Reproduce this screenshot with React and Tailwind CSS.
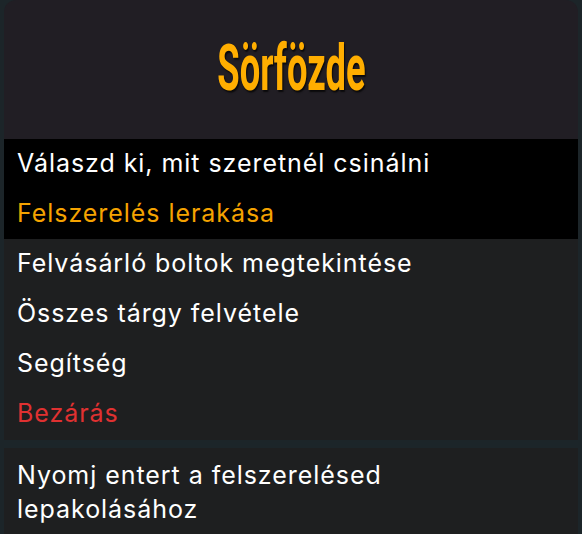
const menuItems = [
  { label: "Felvásárló boltok megtekintése", tone: "text-white" },
  { label: "Összes tárgy felvétele", tone: "text-white" },
  { label: "Segítség", tone: "text-white" },
  { label: "Bezárás", tone: "text-[#e03131]" },
];

const App = () => {
  return (
    <div className="h-[534px] w-[582px] overflow-hidden bg-[#1c2529] px-[4px] font-['Inter','Liberation_Sans',sans-serif] text-[25px] tracking-[0.95px]">
      <div className="flex h-[139px] items-center justify-center rounded-t-[12px] bg-[#211e24] pb-[2px]">
        <span className="inline-block scale-x-56 font-['Roboto',sans-serif] text-[65px] font-bold leading-none tracking-normal text-[#ffae00] [text-shadow:2px_2px_2px_rgba(0,0,0,0.7)]">
          Sörfözde
        </span>
      </div>

      <div className="bg-black px-[13px]">
        <div className="flex h-[50px] items-center text-white">Válaszd ki, mit szeretnél csinálni</div>
        <div className="flex h-[50px] items-center text-[#f5a300]">Felszerelés lerakása</div>
      </div>

      <div className="bg-[#1e1f20] px-[13px] pb-[1px]">
        {menuItems.map((item) => (
          <div key={item.label} className={`flex h-[50px] items-center ${item.tone}`}>
            {item.label}
          </div>
        ))}
      </div>

      <div className="mt-[8px] h-[86px] bg-[#1e1f20] px-[13px] pt-[10px] leading-[34px] text-white">
        Nyomj entert a felszerelésed
        <br />
        lepakolásához
      </div>
    </div>
  );
};

export default App;
